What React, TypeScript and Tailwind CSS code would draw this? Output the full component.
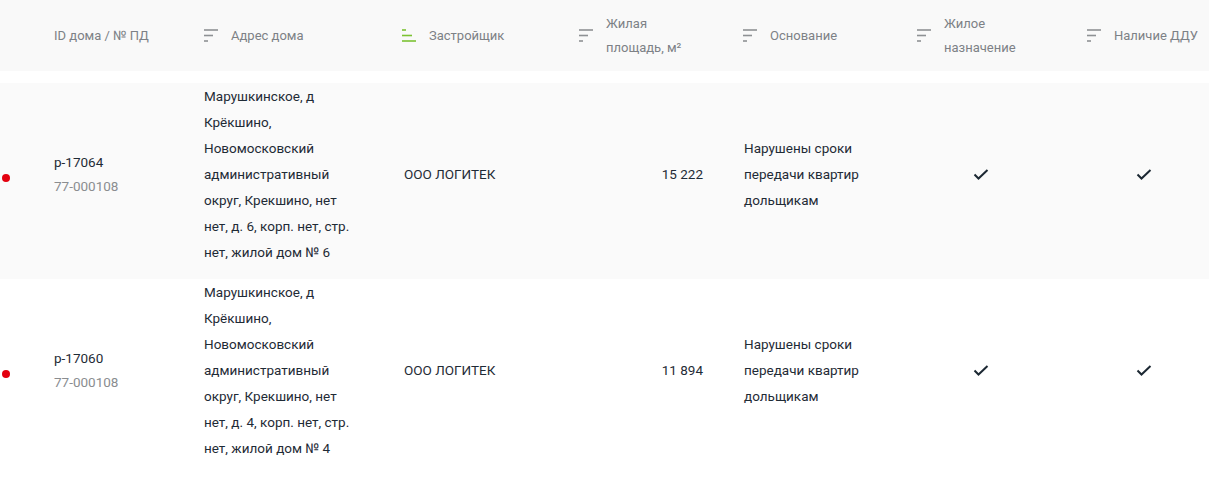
import React from 'react';

interface Row {
  id: string;
  pd: string;
  address: string[];
  developer: string;
  area: string;
  reason: string[];
  residential: boolean;
  ddu: boolean;
}

const rows: Row[] = [
  {
    id: 'р-17064',
    pd: '77-000108',
    address: [
      'Марушкинское, д',
      'Крёкшино,',
      'Новомосковский',
      'административный',
      'округ, Крекшино, нет',
      'нет, д. 6, корп. нет, стр.',
      'нет, жилой дом № 6',
    ],
    developer: 'ООО ЛОГИТЕК',
    area: '15 222',
    reason: ['Нарушены сроки', 'передачи квартир', 'дольщикам'],
    residential: true,
    ddu: true,
  },
  {
    id: 'р-17060',
    pd: '77-000108',
    address: [
      'Марушкинское, д',
      'Крёкшино,',
      'Новомосковский',
      'административный',
      'округ, Крекшино, нет',
      'нет, д. 4, корп. нет, стр.',
      'нет, жилой дом № 4',
    ],
    developer: 'ООО ЛОГИТЕК',
    area: '11 894',
    reason: ['Нарушены сроки', 'передачи квартир', 'дольщикам'],
    residential: true,
    ddu: true,
  },
];

const SortIcon: React.FC<{ active?: boolean }> = ({ active }) => {
  const color = active ? '#7cc233' : '#8e9194';
  const widths = active ? [4, 10, 14] : [14, 9, 4];
  return (
    <svg width="14" height="13" viewBox="0 0 14 13" className="shrink-0">
      {widths.map((w, i) => (
        <line key={i} x1="0" x2={w} y1={1 + i * 5.5} y2={1 + i * 5.5} stroke={color} strokeWidth="1.6" />
      ))}
    </svg>
  );
};

const Check = () => (
  <svg width="16" height="11" viewBox="0 0 16 11" className="shrink-0">
    <path d="M1.5 5.5 L5.5 9.5 L14.5 1" fill="none" stroke="#1c2833" strokeWidth="2" />
  </svg>
);

const HeaderCell: React.FC<{ w: string; active?: boolean; icon?: boolean; children: React.ReactNode }> = ({
  w,
  active,
  icon = true,
  children,
}) => (
  <div className={`${w} flex items-center gap-[13px] shrink-0`}>
    {icon && <SortIcon active={active} />}
    <div className="leading-[24px]">{children}</div>
  </div>
);

export default function App() {
  return (
    <div className="w-[1209px] h-[495px] bg-white font-['Roboto',sans-serif] text-[13.5px] text-[#1f2b36]">
      <div className="flex h-[71px] items-center bg-[#f9f9f9] text-[13px] text-[#7d8186]">
        <div className="w-[54px] shrink-0" />
        <HeaderCell w="w-[150px]" icon={false}>
          ID дома / № ПД
        </HeaderCell>
        <HeaderCell w="w-[198px]">Адрес дома</HeaderCell>
        <HeaderCell w="w-[177px]" active>
          Застройщик
        </HeaderCell>
        <HeaderCell w="w-[164px]">
          Жилая
          <br />
          площадь, м²
        </HeaderCell>
        <HeaderCell w="w-[174px]">Основание</HeaderCell>
        <HeaderCell w="w-[170px]">
          Жилое
          <br />
          назначение
        </HeaderCell>
        <HeaderCell w="w-[122px]">Наличие ДДУ</HeaderCell>
      </div>

      <div className="h-3" />

      {rows.map((r, idx) => (
        <div
          key={r.id}
          className={`flex items-center pb-[14px] ${idx % 2 === 0 ? 'bg-[#fafafa]' : 'bg-white'}`}
        >
          <div className="w-[54px] shrink-0 pt-[8px]">
            <div className="ml-[2px] h-[8px] w-[8px] rounded-full bg-[#e3000f]" />
          </div>
          <div className="w-[150px] shrink-0 leading-[24px]">
            <div>{r.id}</div>
            <div className="text-[#8a8d90]">{r.pd}</div>
          </div>
          <div className="w-[198px] shrink-0 leading-[26px]">
            {r.address.map((l) => (
              <div key={l}>{l}</div>
            ))}
          </div>
          <div className="w-[177px] shrink-0 pl-[2px]">{r.developer}</div>
          <div className="w-[164px] shrink-0 pr-[40px] text-right">{r.area}</div>
          <div className="w-[174px] shrink-0 pl-[1px] leading-[26px]">
            {r.reason.map((l) => (
              <div key={l}>{l}</div>
            ))}
          </div>
          <div className="w-[170px] shrink-0 pl-[56px]">{r.residential && <Check />}</div>
          <div className="w-[122px] shrink-0 pl-[49px]">{r.ddu && <Check />}</div>
        </div>
      ))}
    </div>
  );
}
